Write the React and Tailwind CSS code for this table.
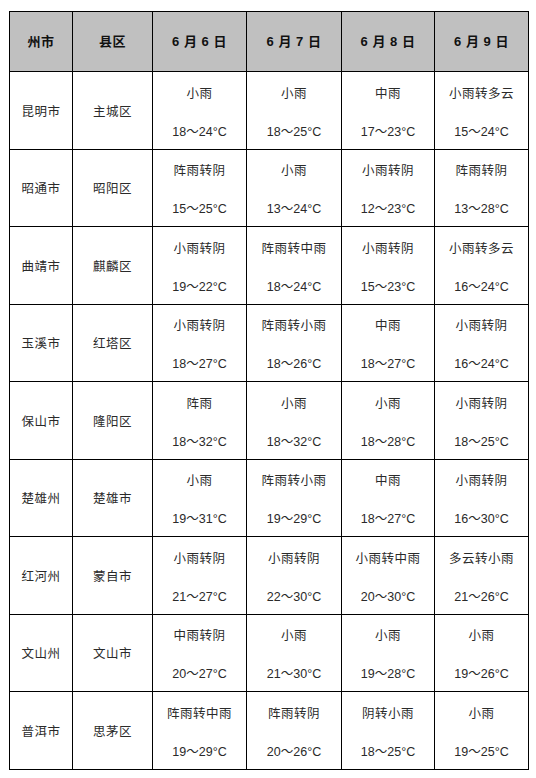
import React from "react";

const rows = [
  ["昆明市", "主城区", ["小雨", "18～24°C"], ["小雨", "18～25°C"], ["中雨", "17～23°C"], ["小雨转多云", "15～24°C"]],
  ["昭通市", "昭阳区", ["阵雨转阴", "15～25°C"], ["小雨", "13～24°C"], ["小雨转阴", "12～23°C"], ["阵雨转阴", "13～28°C"]],
  ["曲靖市", "麒麟区", ["小雨转阴", "19～22°C"], ["阵雨转中雨", "18～24°C"], ["小雨转阴", "15～23°C"], ["小雨转多云", "16～24°C"]],
  ["玉溪市", "红塔区", ["小雨转阴", "18～27°C"], ["阵雨转小雨", "18～26°C"], ["中雨", "18～27°C"], ["小雨转阴", "16～24°C"]],
  ["保山市", "隆阳区", ["阵雨", "18～32°C"], ["小雨", "18～32°C"], ["小雨", "18～28°C"], ["小雨转阴", "18～25°C"]],
  ["楚雄州", "楚雄市", ["小雨", "19～31°C"], ["阵雨转小雨", "19～29°C"], ["中雨", "18～27°C"], ["小雨转阴", "16～30°C"]],
  ["红河州", "蒙自市", ["小雨转阴", "21～27°C"], ["小雨转阴", "22～30°C"], ["小雨转中雨", "20～30°C"], ["多云转小雨", "21～26°C"]],
  ["文山州", "文山市", ["中雨转阴", "20～27°C"], ["小雨", "21～30°C"], ["小雨", "19～28°C"], ["小雨", "19～26°C"]],
  ["普洱市", "思茅区", ["阵雨转中雨", "19～29°C"], ["阵雨转阴", "20～26°C"], ["阴转小雨", "18～25°C"], ["小雨", "19～25°C"]],
];

const font = { fontFamily: '"Liberation Sans", "Noto Sans CJK SC", sans-serif' };

export default function App() {
  return (
    <div className="w-[536px] h-[778px] bg-white pt-[11px] pl-[9px]" style={font}>
      <table className="border-collapse table-fixed w-[519px]">
        <colgroup>
          <col className="w-[63px]" />
          <col className="w-[80px]" />
          <col className="w-[94px]" />
          <col className="w-[95px]" />
          <col className="w-[93px]" />
          <col className="w-[94px]" />
        </colgroup>
        <thead>
          <tr className="h-[60px] bg-[#c0c0c0]">
            {["州市", "县区", "6 月 6 日", "6 月 7 日", "6 月 8 日", "6 月 9 日"].map((h) => (
              <th key={h} className="border border-black text-[13px] font-bold text-[#111] text-center align-middle p-0 tracking-[0.5px]">
                {h}
              </th>
            ))}
          </tr>
        </thead>
        <tbody>
          {rows.map((r, i) => (
            <tr key={i} className={i % 2 === 0 ? "h-[78px]" : "h-[77px]"}>
              <td className="border border-black text-[12.5px] text-[#2a2a2a] text-center align-middle p-0 pt-[3px] tracking-[0.5px]">{r[0]}</td>
              <td className="border border-black text-[12.5px] text-[#2a2a2a] text-center align-middle p-0 pt-[3px] tracking-[0.5px]">{r[1]}</td>
              {r.slice(2).map((c, j) => (
                <td key={j} className="border border-black text-center align-middle p-0">
                  <div className="flex flex-col items-center gap-[22px] pt-[4px]">
                    <span className="text-[12.5px] leading-[16px] text-[#2a2a2a] tracking-[0.5px]">{c[0]}</span>
                    <span className="text-[12.5px] leading-[16px] text-[#2a2a2a]">{c[1]}</span>
                  </div>
                </td>
              ))}
            </tr>
          ))}
        </tbody>
      </table>
    </div>
  );
}
